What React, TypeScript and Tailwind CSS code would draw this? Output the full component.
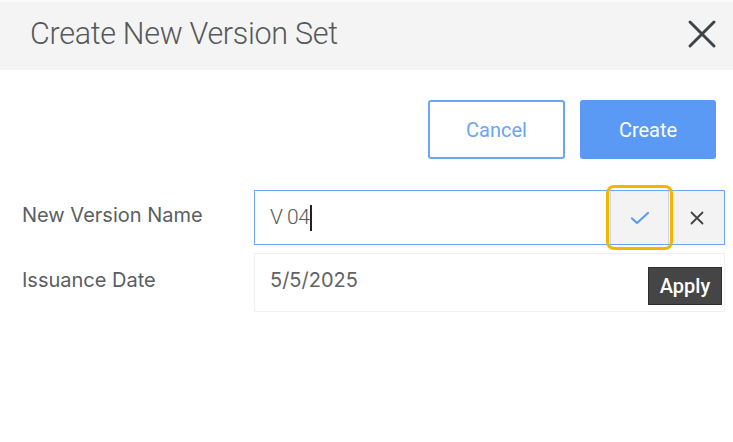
import React from 'react';

const CloseIcon = () => (
  <svg width="30" height="30" viewBox="0 0 30 30" fill="none">
    <path d="M3 3L27 27M27 3L3 27" stroke="#3f4448" strokeWidth="3" strokeLinecap="round" />
  </svg>
);

const CheckIcon = () => (
  <svg width="20" height="16" viewBox="0 0 20 16" fill="none">
    <path d="M2 8.5L7 13L18 3" stroke="#5b9bf5" strokeWidth="2.2" strokeLinecap="round" strokeLinejoin="round" />
  </svg>
);

const SmallX = () => (
  <svg width="14" height="14" viewBox="0 0 14 14" fill="none">
    <path d="M1.5 1.5L12.5 12.5M12.5 1.5L1.5 12.5" stroke="#444" strokeWidth="1.8" strokeLinecap="round" />
  </svg>
);

export default function App() {
  return (
    <div className="w-[733px] h-[442px] bg-white font-['Roboto',sans-serif] overflow-hidden">
      {/* header */}
      <div className="h-[70px] bg-[#f4f4f4] border-t-2 border-[#fafafa] flex items-center justify-between pl-[30px] pr-[15px] pb-[4px]">
        <h1 className="text-[30.5px] font-light text-[#55595c] tracking-[-0.3px]">Create New Version Set</h1>
        <button className="w-[32px] h-[32px] flex items-center justify-center">
          <CloseIcon />
        </button>
      </div>

      {/* actions */}
      <div className="flex justify-end gap-[15px] pr-[17px] mt-[30px]">
        <button className="w-[137px] h-[59px] border-2 border-[#6aa5f7] rounded-[3px] text-[#6aa5f7] text-[20px]">
          Cancel
        </button>
        <button className="w-[136px] h-[59px] bg-[#5a9af5] rounded-[3px] text-white text-[20px]">
          Create
        </button>
      </div>

      {/* form */}
      <div className="mt-[31px] flex flex-col gap-[8px] pr-[8px]">
        <div className="flex items-center">
          <label className="w-[254px] pl-[22px] pb-[6px] font-['Inter',sans-serif] text-[20px] text-[#5a5e61]">New Version Name</label>
          <div className="relative flex-1 h-[55px] flex border-[1.5px] border-[#6aa5f7]">
            <div className="flex-1 flex items-center pl-[15px] text-[21px] font-light text-[#55595c] tracking-[-0.5px]">
              V 04<span className="w-[1.5px] h-[26px] bg-[#222] ml-[1px]" />
            </div>
            <div className="relative w-[59px] bg-[#f3f3f3] border-l border-r border-[#c9d6e8] flex items-center justify-center">
              <CheckIcon />
              <div className="absolute -inset-x-[5px] -inset-y-[6px] border-[3px] border-[#f5b400] rounded-[8px]" />
            </div>
            <div className="w-[55px] bg-[#f3f3f3] flex items-center justify-center">
              <SmallX />
            </div>
          </div>
        </div>

        <div className="flex items-center">
          <label className="w-[254px] pl-[22px] pb-[6px] font-['Inter',sans-serif] text-[20px] text-[#5a5e61]">Issuance Date</label>
          <div className="relative flex-1 h-[59px] flex items-center border border-[#f0f0f0] pl-[15px] pb-[6px] font-['Inter',sans-serif] text-[20px] text-[#5f6366]">
            5/5/2025
            <div className="absolute right-[2px] top-[13px] w-[74px] h-[38px] bg-[#454545] border border-[#2f2f2f] flex items-center justify-center font-['Roboto',sans-serif] font-medium text-white text-[20px]">
              Apply
            </div>
          </div>
        </div>
      </div>
    </div>
  );
}
